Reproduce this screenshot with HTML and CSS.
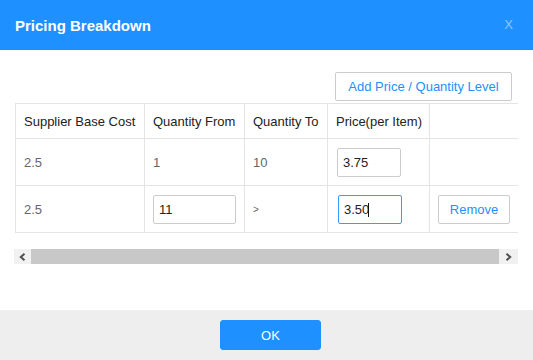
FILE: index.html
```html
<!DOCTYPE html>
<html lang="en">
<head>
<meta charset="utf-8">
<title>Pricing Breakdown</title>
<link rel="stylesheet" href="styles.css">
</head>
<body>
<div class="modal">
  <header class="modal-header">
    <h1 class="modal-title">Pricing Breakdown</h1>
    <span class="modal-close">X</span>
  </header>
  <main class="modal-body">
    <div class="toolbar">
      <button class="btn btn-outline btn-add" type="button">Add Price / Quantity Level</button>
    </div>
    <div class="grid-wrap">
      <div class="grid-clip">
        <table class="grid">
          <colgroup>
            <col class="c1"><col class="c2"><col class="c3"><col class="c4"><col class="c5">
          </colgroup>
          <thead>
            <tr>
              <th>Supplier Base Cost</th>
              <th>Quantity From</th>
              <th>Quantity To</th>
              <th>Price(per Item)</th>
              <th></th>
            </tr>
          </thead>
          <tbody>
            <tr>
              <td>2.5</td>
              <td>1</td>
              <td>10</td>
              <td><input class="field field-price" type="text" value="3.75"></td>
              <td></td>
            </tr>
            <tr>
              <td>2.5</td>
              <td><input class="field field-qty" type="text" value="11"></td>
              <td><span class="gt">&gt;</span></td>
              <td><span class="field-wrap"><input class="field field-price is-focused" type="text" value="3.50"><span class="caret"></span></span></td>
              <td><button class="btn btn-outline btn-remove" type="button">Remove</button></td>
            </tr>
          </tbody>
        </table>
      </div>
      <div class="hscroll">
        <span class="hscroll-btn hscroll-left"><svg width="7" height="8" viewBox="0 0 7 8"><polyline points="5.5,0.8 1.8,4 5.5,7.2" fill="none" stroke="#505050" stroke-width="2"/></svg></span>
        <span class="hscroll-track"><span class="hscroll-thumb"></span></span>
        <span class="hscroll-btn hscroll-right"><svg width="7" height="8" viewBox="0 0 7 8"><polyline points="1.5,0.8 5.2,4 1.5,7.2" fill="none" stroke="#505050" stroke-width="2"/></svg></span>
      </div>
    </div>
  </main>
  <footer class="modal-footer">
    <button class="btn btn-primary btn-ok" type="button">OK</button>
  </footer>
</div>
</body>
</html>
```

FILE: styles.css
```css
* { box-sizing: border-box; }

html, body {
  margin: 0;
  padding: 0;
  background: #fff;
}

body {
  font-family: "Liberation Sans", Arial, sans-serif;
  font-size: 13px;
  color: #333;
}

.modal {
  width: 533px;
  height: 360px;
  display: flex;
  flex-direction: column;
  overflow: hidden;
}

.modal-header {
  height: 50px;
  flex: 0 0 50px;
  background: #1e90ff;
  display: flex;
  align-items: center;
  justify-content: space-between;
  padding: 0 20px 0 15px;
}

.modal-title {
  margin: 0;
  font-size: 15px;
  font-weight: bold;
  color: #fff;
  line-height: 18px;
  padding-top: 1px;
}

.modal-close {
  font-size: 13px;
  color: rgba(255, 255, 255, 0.5);
  line-height: 15px;
  padding-bottom: 1px;
}

.modal-body {
  flex: 1 1 auto;
  padding: 22px 0 0 14px;
}

.toolbar {
  display: flex;
  justify-content: flex-end;
  padding-right: 21px;
  margin-bottom: 2px;
}

.btn {
  font-family: "Liberation Sans", Arial, sans-serif;
  font-size: 13px;
  line-height: 15px;
  cursor: pointer;
  border-radius: 2px;
  margin: 0;
}

.btn-outline {
  background: #fff;
  border: 1px solid #cccccc;
  color: #1e90ff;
}

.btn-add {
  width: 177px;
  height: 29px;
  padding: 0;
}

.btn-remove {
  width: 72px;
  height: 29px;
  padding: 0;
  vertical-align: middle;
}

.btn-primary {
  background: #1e90ff;
  border: 1px solid #1e90ff;
  color: #fff;
}

.grid-wrap {
  width: 504px;
}

.grid-clip {
  overflow: hidden;
  padding-left: 1px;
}

.grid {
  border-collapse: separate;
  border-spacing: 0;
  table-layout: fixed;
  width: 505px;
  border-top: 1px solid #e4e4e4;
  border-left: 1px solid #e4e4e4;
}

.grid .c1 { width: 129px; }
.grid .c2 { width: 100px; }
.grid .c3 { width: 83px; }
.grid .c4 { width: 102px; }
.grid .c5 { width: 90px; }

.grid th,
.grid td {
  border-right: 1px solid #e4e4e4;
  border-bottom: 1px solid #e4e4e4;
  padding: 0 8px;
  text-align: left;
  vertical-align: middle;
  white-space: nowrap;
  font-size: 13px;
  line-height: 15px;
}

.grid th {
  height: 35px;
  font-weight: normal;
  color: #222;
  padding-top: 1px;
}

.grid td {
  height: 47px;
  color: #666;
}

.field {
  font-family: "Liberation Sans", Arial, sans-serif;
  font-size: 13px;
  color: #222;
  height: 29px;
  padding: 0 5px;
  border: 1px solid #cccccc;
  border-radius: 2px;
  background: #fff;
  outline: none;
  vertical-align: middle;
  margin: 0;
}

.field-price { width: 64px; }
.field-qty { width: 83px; }

.field.is-focused {
  border-color: #3a9cff;
}

.field-wrap {
  position: relative;
  display: inline-block;
  vertical-align: middle;
  margin-left: 1px;
}

.grid td .field-price { margin-left: 1px; }
.field-wrap .field-price { margin-left: 0; display: block; }

.caret {
  position: absolute;
  left: 31px;
  top: 8px;
  width: 1px;
  height: 14px;
  background: #111;
}

.gt {
  font-size: 10px;
  color: #666;
}

.hscroll {
  display: flex;
  height: 15px;
  margin-top: 16px;
  background: #f1f1f1;
}

.hscroll-btn {
  display: flex;
  align-items: center;
  justify-content: center;
  flex: 0 0 17px;
}

.hscroll-right {
  flex-basis: 19px;
}

.hscroll-track {
  flex: 1 1 auto;
  display: flex;
}

.hscroll-thumb {
  flex: 1 1 auto;
  background: #c8c8c8;
}

.modal-footer {
  flex: 0 0 50px;
  background: #eeeeee;
  display: flex;
  justify-content: center;
  align-items: flex-start;
  padding: 10px 0 0 8px;
}

.btn-ok {
  width: 101px;
  height: 30px;
  padding: 0;
  border-radius: 3px;
}
```
